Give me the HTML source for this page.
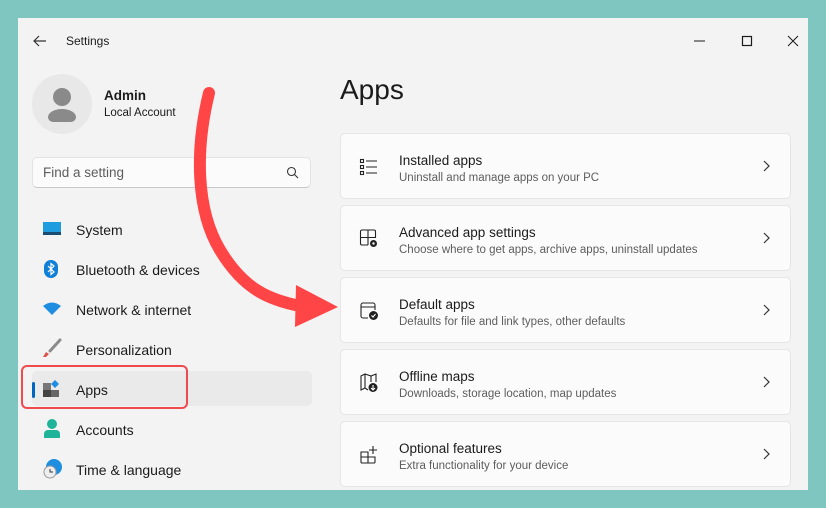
<!DOCTYPE html>
<html><head><style>
body{margin:0;width:826px;height:508px;background:#7fc6c0;position:relative;overflow:hidden;font-family:"Liberation Sans",sans-serif;}
.win{position:absolute;left:18px;top:18px;width:790px;height:472px;background:#f3f3f3;overflow:hidden}
.a{position:absolute}
.t{font-size:13.5px;color:#1b1b1b}
.card{position:absolute;left:322px;width:451px;height:66px;background:#fbfbfb;border:1px solid #e5e5e5;border-radius:5px;box-sizing:border-box}
.card .h{position:absolute;left:58px;top:19px;font-size:13.5px;color:#1b1b1b}
.card .s{position:absolute;left:58px;top:38px;font-size:11.5px;color:#5d5d5d}
.card svg.i{position:absolute;left:18px;top:23px}
.card .c{position:absolute;right:20px;top:26px}
.nav{position:absolute;left:58px;font-size:14px;color:#1b1b1b}
</style></head><body>
<div class="win">
<svg class="a" style="left:14px;top:16px" width="16" height="14"><path d="M14 7H2M7 2L2 7l5 5" stroke="#333" stroke-width="1.2" fill="none"/></svg>
<div class="a" style="left:48px;top:16px;font-size:12px;color:#1b1b1b">Settings</div>
<svg class="a" style="left:674px;top:10px" width="110" height="20"><path d="M2 13h11" stroke="#1b1b1b" stroke-width="1"/><rect x="50.5" y="8.5" width="9" height="9" fill="none" stroke="#1b1b1b" stroke-width="1.2"/><path d="M96 8l10 10M106 8l-10 10" stroke="#1b1b1b" stroke-width="1"/></svg>
<div class="a" style="left:14px;top:56px;width:60px;height:60px;border-radius:50%;background:#e8e8e8"></div>
<svg class="a" style="left:14px;top:56px" width="60" height="60"><circle cx="30" cy="23" r="9" fill="#8a8a8a"/><path d="M16 43a14 8 0 0 1 28 0v0a5 5 0 0 1-5 5H21a5 5 0 0 1-5-5z" fill="#8a8a8a"/></svg>
<div class="a" style="left:86px;top:70px;font-size:13.5px;font-weight:bold;color:#1b1b1b">Admin</div>
<div class="a" style="left:86px;top:89px;font-size:11.5px;color:#1b1b1b">Local Account</div>
<div class="a" style="left:14px;top:139px;width:279px;height:31px;background:#fbfbfb;border:1px solid #e3e3e3;border-bottom-color:#c8c8c8;border-radius:5px;box-sizing:border-box"></div>
<div class="a" style="left:25px;top:147px;font-size:13.5px;color:#5d5d5d">Find a setting</div>
<svg class="a" style="left:268px;top:148px" width="14" height="14"><circle cx="5.5" cy="5.5" r="4" stroke="#333" fill="none" stroke-width="1.1"/><path d="M8.5 8.5l3.5 3.5" stroke="#333" stroke-width="1.1"/></svg>
<!-- nav -->
<svg class="a" style="left:24px;top:203px" width="20" height="16"><rect x="1" y="1" width="18" height="11" fill="#1f9ce0"/><rect x="1" y="11" width="18" height="3" fill="#1a4b70"/></svg>
<div class="nav" style="top:204px">System</div>
<svg class="a" style="left:25px;top:241px" width="16" height="20"><rect x="1" y="1" width="14" height="18" rx="7" fill="#0f7fd8"/><path d="M5 7l6 6-3 2.5V4.5l3 2.5-6 6" stroke="#fff" stroke-width="1.2" fill="none"/></svg>
<div class="nav" style="top:244px">Bluetooth &amp; devices</div>
<svg class="a" style="left:24px;top:284px" width="20" height="14"><path d="M1 4Q10-3 19 4L10 13z" fill="#1f8ee0"/></svg>
<div class="nav" style="top:284px">Network &amp; internet</div>
<svg class="a" style="left:24px;top:320px" width="20" height="20"><path d="M18 2L8 13" stroke="#8b8b8b" stroke-width="3" stroke-linecap="round"/><path d="M4 14l3 2-3 3-3 0z" fill="#d9534f"/></svg>
<div class="nav" style="top:324px">Personalization</div>
<div class="a" style="left:14px;top:353px;width:280px;height:35px;background:#eaeaea;border-radius:5px"></div>
<div class="a" style="left:14px;top:364px;width:3px;height:16px;background:#0067c0;border-radius:2px"></div>
<svg class="a" style="left:24px;top:361px" width="20" height="20"><rect x="1" y="4" width="8" height="7" fill="#777"/><rect x="1" y="11" width="8" height="7" fill="#444"/><rect x="9" y="11" width="8" height="7" fill="#666"/><path d="M13 1l4 4-4 4-4-4z" fill="#1f8ee0"/></svg>
<div class="nav" style="top:364px">Apps</div>
<div class="a" style="left:3px;top:347px;width:167px;height:44px;border:2px solid #f04a4f;border-radius:6px;box-sizing:border-box"></div>
<svg class="a" style="left:24px;top:400px" width="20" height="22"><circle cx="10" cy="6" r="5" fill="#1fb39a"/><path d="M2 20v-4a4 4 0 0 1 4-4h8a4 4 0 0 1 4 4v4z" fill="#1fb39a"/></svg>
<div class="nav" style="top:404px">Accounts</div>
<svg class="a" style="left:24px;top:440px" width="22" height="22"><circle cx="12" cy="9" r="8" fill="#1f8ee0"/><circle cx="8" cy="14" r="6" fill="#eee" stroke="#999" stroke-width="1"/><path d="M8 11v3h3" stroke="#333" fill="none"/></svg>
<div class="nav" style="top:444px">Time &amp; language</div>
<!-- right -->
<div class="a" style="left:322px;top:56px;font-size:28px;font-weight:500;color:#1b1b1b">Apps</div>
<div class="card" style="top:115px"><svg class="i" width="20" height="20"><g stroke="#222" stroke-width="1.1" fill="none"><rect x="1.5" y="2.5" width="3" height="3"/><rect x="1.5" y="8.5" width="3" height="3"/><rect x="1.5" y="14.5" width="3" height="3"/><path d="M7 4h11M7 10h11M7 16h11"/></g></svg><div class="h">Installed apps</div><div class="s">Uninstall and manage apps on your PC</div><svg class="c" width="8" height="12"><path d="M2 1l5 5-5 5" stroke="#333" fill="none" stroke-width="1.2"/></svg></div>
<div class="card" style="top:187px"><svg class="i" width="20" height="20"><g stroke="#222" stroke-width="1.1" fill="none"><path d="M9 16H3a1.5 1.5 0 0 1-1.5-1.5v-12A1.5 1.5 0 0 1 3 1h12a1.5 1.5 0 0 1 1.5 1.5V9M1.5 8.5h15M9 1v15"/></g><circle cx="14.5" cy="14.5" r="3.5" fill="#222"/><circle cx="14.5" cy="14.5" r="1.2" fill="#fff"/></svg><div class="h">Advanced app settings</div><div class="s">Choose where to get apps, archive apps, uninstall updates</div><svg class="c" width="8" height="12"><path d="M2 1l5 5-5 5" stroke="#333" fill="none" stroke-width="1.2"/></svg></div>
<div class="card" style="top:259px"><svg class="i" width="20" height="20"><g stroke="#222" stroke-width="1.1" fill="none"><path d="M9 17H4a2 2 0 0 1-2-2V4a2 2 0 0 1 2-2h10a2 2 0 0 1 2 2v5M2 6h14"/></g><circle cx="14.5" cy="14.5" r="4.5" fill="#222"/><path d="M12.5 14.5l1.5 1.5 2.5-3" stroke="#fff" fill="none" stroke-width="1.1"/></svg><div class="h">Default apps</div><div class="s">Defaults for file and link types, other defaults</div><svg class="c" width="8" height="12"><path d="M2 1l5 5-5 5" stroke="#333" fill="none" stroke-width="1.2"/></svg></div>
<div class="card" style="top:331px"><svg class="i" width="20" height="20"><g stroke="#222" stroke-width="1.1" fill="none"><path d="M9 17l-3-2-4 2V3l4-2 6 2 5-2v8M6 1v14M12 3v6"/></g><circle cx="14" cy="14.5" r="4.5" fill="#222"/><path d="M14 12v5M12 15l2 2 2-2" stroke="#fff" fill="none" stroke-width="1.1"/></svg><div class="h">Offline maps</div><div class="s">Downloads, storage location, map updates</div><svg class="c" width="8" height="12"><path d="M2 1l5 5-5 5" stroke="#333" fill="none" stroke-width="1.2"/></svg></div>
<div class="card" style="top:403px"><svg class="i" width="20" height="20"><g stroke="#222" stroke-width="1.1" fill="none"><path d="M2 7h7v11H3a1 1 0 0 1-1-1zM9 12h7v5a1 1 0 0 1-1 1H9M2 12h7M14 1v8M10 5h8"/></g></svg><div class="h">Optional features</div><div class="s">Extra functionality for your device</div><svg class="c" width="8" height="12"><path d="M2 1l5 5-5 5" stroke="#333" fill="none" stroke-width="1.2"/></svg></div>
</div>
<svg class="a" style="left:0;top:0" width="826" height="508"><path d="M209 93C195 150 196 210 220 250S270 300 300 306" stroke="#ff4545" stroke-width="12" fill="none" stroke-linecap="round"/><path d="M296 285L338 307 295 327z" fill="#ff4545"/></svg>
</body></html>
